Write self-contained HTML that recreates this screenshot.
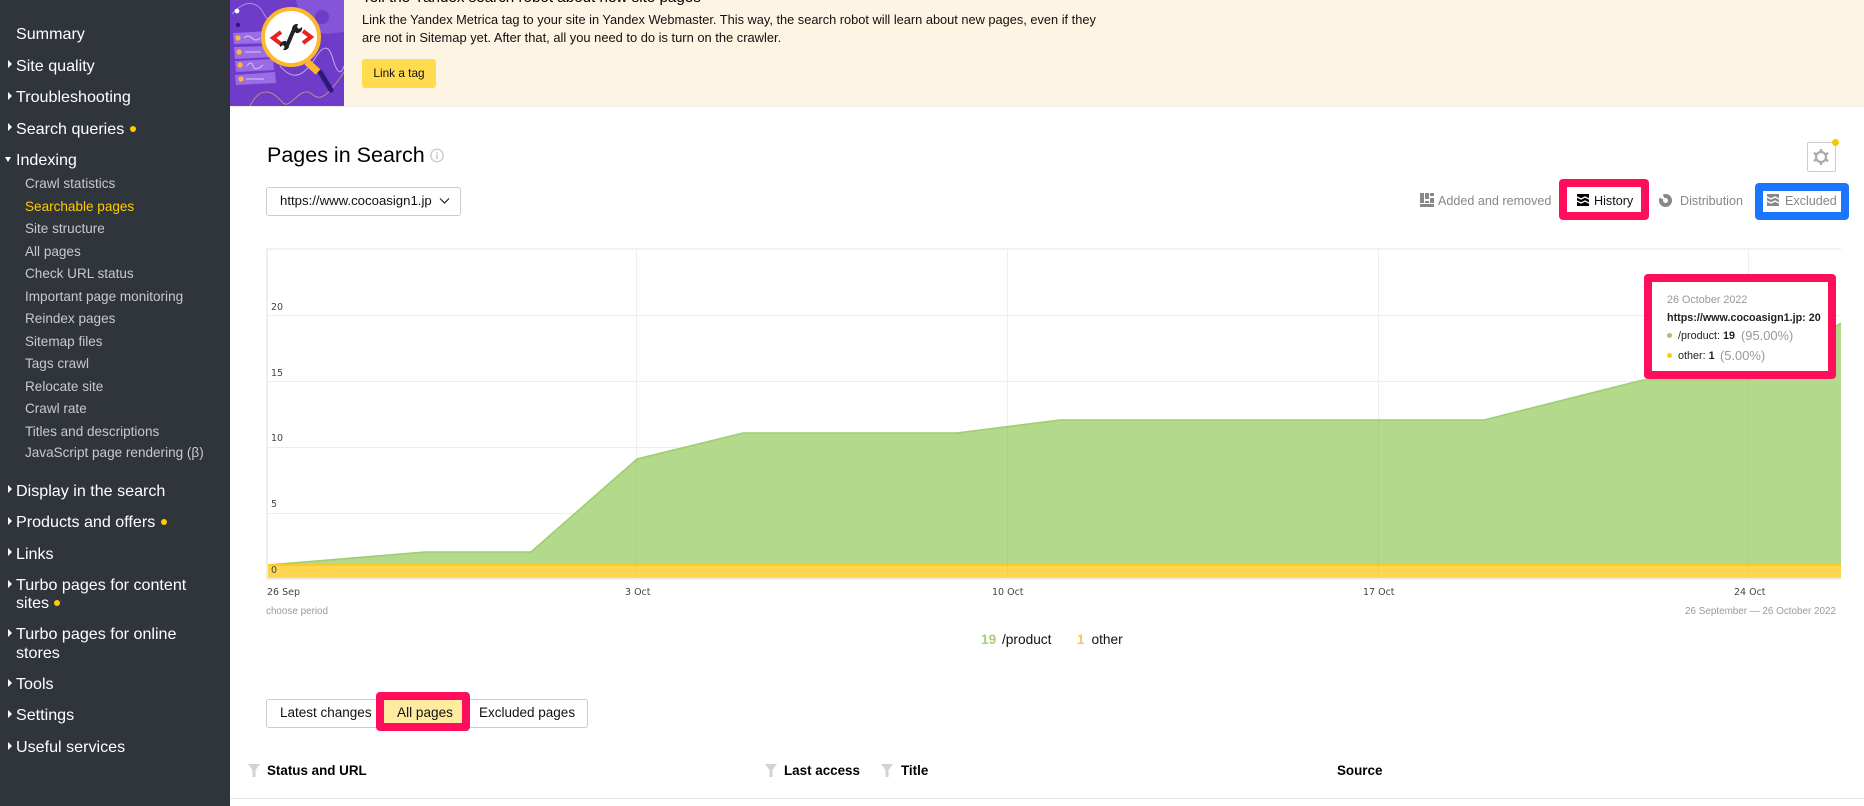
<!DOCTYPE html>
<html><head><meta charset="utf-8"><title>Pages in Search</title>
<style>
html,body{margin:0;padding:0;background:#fff;width:1864px;height:806px;overflow:hidden;font-family:"Liberation Sans",sans-serif;color:#000}
#r{position:relative;width:1864px;height:806px;overflow:hidden}
.a{position:absolute}
.t{position:absolute;white-space:nowrap;line-height:20px}
.m{font-size:16.1px;color:#fff;left:16px}
.s{font-size:13.55px;color:#c9c9c9;left:25px}
.tri{position:absolute;left:7.5px;width:0;height:0;border-left:4.5px solid #fff;border-top:4px solid transparent;border-bottom:4px solid transparent}
.dot{position:absolute;width:6px;height:6px;border-radius:50%;background:#fc0}
.ax{font-family:"DejaVu Sans",sans-serif;font-size:9.5px;color:#444}
.g{color:#888;font-size:12.6px}
.pk{position:absolute;box-sizing:border-box;border:8px solid #ff0f5b;border-radius:4px;background:#fff}
.th{font-size:13.4px;font-weight:bold}
</style></head><body><div id="r">

<div class="a" style="left:0;top:0;width:230px;height:806px;background:#30343b"></div>
<div class="t m" style="top:24px">Summary</div>
<div class="tri" style="top:60px"></div><div class="t m" style="top:56px">Site quality</div>
<div class="tri" style="top:92px"></div><div class="t m" style="top:87px">Troubleshooting</div>
<div class="tri" style="top:123px"></div><div class="t m" style="top:119px">Search queries</div><div class="dot" style="left:129.5px;top:125.5px"></div>
<div class="a" style="left:5px;top:157px;width:0;height:0;border-top:5px solid #fff;border-left:3.5px solid transparent;border-right:3.5px solid transparent"></div><div class="t m" style="top:150px">Indexing</div>
<div class="t s" style="top:174px">Crawl statistics</div>
<div class="t s" style="top:197px;color:#fc0">Searchable pages</div>
<div class="t s" style="top:219px">Site structure</div>
<div class="t s" style="top:242px">All pages</div>
<div class="t s" style="top:264px">Check URL status</div>
<div class="t s" style="top:287px">Important page monitoring</div>
<div class="t s" style="top:309px">Reindex pages</div>
<div class="t s" style="top:332px">Sitemap files</div>
<div class="t s" style="top:354px">Tags crawl</div>
<div class="t s" style="top:377px">Relocate site</div>
<div class="t s" style="top:399px">Crawl rate</div>
<div class="t s" style="top:422px">Titles and descriptions</div>
<div class="t s" style="top:443px">JavaScript page rendering (β)</div>
<div class="tri" style="top:485px"></div><div class="t m" style="top:481px">Display in the search</div>
<div class="tri" style="top:517px"></div><div class="t m" style="top:512px">Products and offers</div><div class="dot" style="left:160.5px;top:519px"></div>
<div class="tri" style="top:548px"></div><div class="t m" style="top:544px">Links</div>
<div class="tri" style="top:580px"></div><div class="t m" style="top:575px">Turbo pages for content</div>
<div class="t m" style="top:593px">sites</div><div class="dot" style="left:54px;top:600px"></div>
<div class="tri" style="top:629px"></div><div class="t m" style="top:624px">Turbo pages for online</div>
<div class="t m" style="top:643px">stores</div>
<div class="tri" style="top:679px"></div><div class="t m" style="top:674px">Tools</div>
<div class="tri" style="top:710px"></div><div class="t m" style="top:705px">Settings</div>
<div class="tri" style="top:742px"></div><div class="t m" style="top:737px">Useful services</div>

<div class="a" style="left:230px;top:0;width:1634px;height:106px;background:#fdf4e3;border-bottom:1.5px solid #ececec"></div>
<svg class="a" style="left:230px;top:0" width="114" height="106" viewBox="0 0 114 106">
<rect width="114" height="106" fill="#6f3bc9"/>
<path d="M66 0 L114 0 L114 32 L96 34 Q72 30 66 0Z" fill="#8455d8"/>
<circle cx="92" cy="17" r="7" fill="#6f3bc9"/>
<path d="M2 14 C16 -2 28 2 34 14 S56 32 64 20" fill="none" stroke="#a992de" stroke-width="1"/>
<circle cx="7" cy="11" r="2.4" fill="#fff"/><circle cx="8" cy="25" r="2.2" fill="#2d1a78"/>
<path d="M3 33 L41 31 L43 43 L4 44Z M4 47 L43 46 L44 57 L5 59Z M5 61 L43 59 L44 70 L6 72Z M5 75 L45 72 L46 83 L6 85Z" fill="#9a6de6"/>
<circle cx="8" cy="38" r="2.6" fill="#ffb92e"/><circle cx="9" cy="52" r="2.6" fill="#ffb92e"/><circle cx="10" cy="65" r="2.6" fill="#ffb92e"/><circle cx="11" cy="79" r="2.6" fill="#ffb92e"/>
<path d="M14 38 q4 -4 8 0 t8 0 M15 52 h16 M17 66 q4 -6 6 0 t10 -1 M16 79 h18" stroke="#d8c8f6" stroke-width="0.9" fill="none"/>
<path d="M50 66 C62 80 72 78 84 60 C92 46 98 44 102 56 C106 70 110 78 114 66" fill="none" stroke="#c9b3ef" stroke-width="0.9"/>
<path d="M20 106 C30 86 42 90 52 102 C60 112 70 84 82 94 C90 102 98 96 114 72" fill="none" stroke="#b98d90" stroke-width="1"/>
<line x1="90" y1="72" x2="101" y2="90" stroke="#2d1a78" stroke-width="5" stroke-linecap="round"/>
<line x1="77" y1="62" x2="88" y2="72" stroke="#fdb92e" stroke-width="7"/>
<circle cx="61" cy="37" r="28" fill="#fff" stroke="#fdb92e" stroke-width="4"/>
<path d="M51 32 L43 38 L51 44" fill="none" stroke="#e5231f" stroke-width="4"/>
<path d="M73 31 L81 37 L73 43" fill="none" stroke="#e5231f" stroke-width="4"/>
<path d="M65 27 L56 48" stroke="#222" stroke-width="4"/>
<path d="M62 28 a5 5 0 0 1 6 -4 l-1 3 2 2 3 -2 a5 5 0 0 1 -6 6Z M59 47 a5 5 0 0 1 -6 3 l2 -3 -2 -2 -3 2 a5 5 0 0 1 6 -6Z" fill="#222"/>
</svg>
<div class="t" style="left:362px;top:-12px;font-size:15.2px">Tell the Yandex search robot about new site pages</div>
<div class="t" style="left:362px;top:10px;font-size:12.8px;color:#111">Link the Yandex Metrica tag to your site in Yandex Webmaster. This way, the search robot will learn about new pages, even if they</div>
<div class="t" style="left:362px;top:28px;font-size:12.9px;color:#111">are not in Sitemap yet. After that, all you need to do is turn on the crawler.</div>
<div class="a" style="left:362px;top:59px;width:74px;height:29px;background:#ffdb4d;border-radius:3px"></div>
<div class="t" style="left:362px;width:74px;text-align:center;top:63px;font-size:11.8px;color:#111">Link a tag</div>

<div class="t" style="left:267px;top:144px;font-size:21.5px;line-height:22px">Pages in Search</div>
<svg class="a" style="left:430px;top:148px" width="15" height="15" viewBox="0 0 15 15"><circle cx="7" cy="7.5" r="6.2" fill="none" stroke="#ccc" stroke-width="1.5"/><rect x="6.2" y="6.5" width="1.6" height="4.5" fill="#ccc"/><rect x="6.2" y="4" width="1.6" height="1.6" fill="#ccc"/></svg>

<div class="a" style="left:266px;top:187px;width:193px;height:27px;border:1px solid #ccc;border-radius:3px"></div>
<div class="t" style="left:280px;top:191px;font-size:13.2px;color:#111">https://www.cocoasign1.jp</div>
<svg class="a" style="left:439px;top:195px" width="11" height="11" viewBox="0 0 11 11"><path d="M1 3.5 L5.5 8 L10 3.5" fill="none" stroke="#222" stroke-width="1.2"/></svg>

<div class="a" style="left:1807px;top:142px;width:27px;height:28px;border:1px solid #ccc;border-radius:2px"></div>
<svg class="a" style="left:1813px;top:149px" width="16" height="16" viewBox="0 0 16 16"><circle cx="8" cy="8" r="5" fill="none" stroke="#aaa" stroke-width="2.2"/><g stroke="#aaa" stroke-width="2.4"><line x1="8" y1="0" x2="8" y2="3"/><line x1="8" y1="13" x2="8" y2="16"/><line x1="0.8" y1="4" x2="3.4" y2="5.5"/><line x1="12.6" y1="10.5" x2="15.2" y2="12"/><line x1="0.8" y1="12" x2="3.4" y2="10.5"/><line x1="12.6" y1="5.5" x2="15.2" y2="4"/></g></svg>
<div class="a" style="left:1832px;top:139px;width:7px;height:7px;border-radius:50%;background:#f5c800"></div>

<svg class="a" style="left:1420px;top:193px" width="14" height="14" viewBox="0 0 14 14"><path d="M0 0H4V10H0Z M5 0H9V6H5Z M5 8H9V10H5Z M10 0H14V3H10Z M10 5H14V10H10Z M0 11H14V14H0Z" fill="#888"/></svg>
<div class="t g" style="left:1438px;top:191px">Added and removed</div>

<div class="pk" style="left:1559px;top:179px;width:90px;height:41px"></div>
<svg class="a" style="left:1577px;top:194px" width="12" height="12" viewBox="0 0 12 12"><rect width="12" height="12" fill="#000"/><path d="M0 3 L4 5 L8 3 L12 5 M0 7 L4 9 L8 7 L12 9" fill="none" stroke="#fff" stroke-width="1.3"/></svg>
<div class="t" style="left:1594px;top:191px;font-size:12.6px;color:#111">History</div>

<svg class="a" style="left:1659px;top:194px" width="13" height="13" viewBox="0 0 13 13"><circle cx="6.5" cy="6.5" r="4.5" fill="none" stroke="#888" stroke-width="4" stroke-dasharray="25 3.3" transform="rotate(-115 6.5 6.5)"/></svg>
<div class="t g" style="left:1680px;top:191px">Distribution</div>

<div class="pk" style="left:1755px;top:183px;width:94px;height:37px;border-color:#1a75ff"></div>
<svg class="a" style="left:1767px;top:194px" width="12" height="12" viewBox="0 0 12 12"><rect width="12" height="12" fill="#888"/><path d="M0 3 L4 5 L8 3 L12 5 M0 7 L4 9 L8 7 L12 9" fill="none" stroke="#fff" stroke-width="1.3"/></svg>
<div class="t g" style="left:1785px;top:191px">Excluded</div>

<svg class="a" style="left:0;top:0" width="1864" height="806" viewBox="0 0 1864 806">
<g stroke="#eeeeee" stroke-width="1" fill="none">
<line x1="266" y1="249" x2="1841" y2="249" stroke-width="1.5"/>
<line x1="266" y1="315.5" x2="1841" y2="315.5"/><line x1="266" y1="381.5" x2="1841" y2="381.5"/><line x1="266" y1="447.5" x2="1841" y2="447.5"/><line x1="266" y1="513.5" x2="1841" y2="513.5"/>
<line x1="636.5" y1="249" x2="636.5" y2="578"/><line x1="1007.5" y1="249" x2="1007.5" y2="578"/><line x1="1378.5" y1="249" x2="1378.5" y2="578"/><line x1="1748.5" y1="249" x2="1748.5" y2="578"/>
<line x1="267" y1="249" x2="267" y2="579" stroke-width="2"/>
<line x1="266" y1="579" x2="1841" y2="579" stroke-width="2"/>
</g>
<path d="M268 565 L425 552 L531 552 L637 459 L743 433 L957 433 L1060 420 L1484 420 L1643 380 L1748 380 L1841 323 L1841 565Z" fill="#b2d98c"/>
<path d="M268 565 L425 552 L531 552 L637 459 L743 433 L957 433 L1060 420 L1484 420 L1643 380 L1748 380 L1841 323" fill="none" stroke="#9fce6f" stroke-width="1.6"/>
<rect x="268" y="564" width="1573" height="14" fill="#ffd64f"/>
<rect x="268" y="564" width="1573" height="2" fill="#fcca25"/>
<g stroke="#000" stroke-opacity=".03"><line x1="636.5" y1="460" x2="636.5" y2="578"/><line x1="1007.5" y1="425" x2="1007.5" y2="578"/><line x1="1378.5" y1="420" x2="1378.5" y2="578"/><line x1="1748.5" y1="380" x2="1748.5" y2="578"/></g>
</svg>
<div class="t ax" style="left:271px;top:298px">20</div>
<div class="t ax" style="left:271px;top:364px">15</div>
<div class="t ax" style="left:271px;top:429px">10</div>
<div class="t ax" style="left:271px;top:495px">5</div>
<div class="t ax" style="left:271px;top:561px">0</div>
<div class="t ax" style="left:267px;top:583px">26 Sep</div>
<div class="t ax" style="left:625px;top:583px">3 Oct</div>
<div class="t ax" style="left:992px;top:583px">10 Oct</div>
<div class="t ax" style="left:1363px;top:583px">17 Oct</div>
<div class="t ax" style="left:1734px;top:583px">24 Oct</div>
<div class="t" style="left:266px;top:602px;font-size:9.9px;color:#999">choose period</div>
<div class="t" style="right:28px;top:602px;font-size:9.9px;color:#999">26 September — 26 October 2022</div>

<div class="pk" style="left:1644px;top:274px;width:192px;height:105px"></div>
<div class="t" style="left:1667px;top:289.5px;font-size:10.8px;color:#999">26 October 2022</div>
<div class="t" style="left:1667px;top:308px;font-size:10.75px;font-weight:bold;color:#222">https://www.cocoasign1.jp: 20</div>
<div class="a" style="left:1667px;top:333px;width:5px;height:5px;border-radius:50%;background:#99cc66"></div>
<div class="t" style="left:1678px;top:326px;font-size:10.8px;color:#222">/product: <b>19</b></div>
<div class="t" style="left:1741px;top:326px;font-size:12.9px;color:#999">(95.00%)</div>
<div class="a" style="left:1667px;top:353px;width:5px;height:5px;border-radius:50%;background:#fc0"></div>
<div class="t" style="left:1678px;top:346px;font-size:10.8px;color:#222">other: <b>1</b></div>
<div class="t" style="left:1720px;top:346px;font-size:12.9px;color:#999">(5.00%)</div>

<div class="t" style="left:981px;top:630px;font-size:13.7px;font-weight:bold;color:#a5d273">19</div>
<div class="t" style="left:1002px;top:630px;font-size:13.7px;color:#111">/product</div>
<div class="t" style="left:1077px;top:630px;font-size:13.7px;font-weight:bold;color:#fcc45a">1</div>
<div class="t" style="left:1091.5px;top:630px;font-size:13.7px;color:#111">other</div>

<div class="a" style="left:266px;top:699px;width:320px;height:27px;border:1px solid #ccc;border-radius:3px"></div>
<div class="t" style="left:280px;top:703px;font-size:13.5px;color:#111">Latest changes</div>
<div class="pk" style="left:376px;top:692px;width:94px;height:39px;background:#ffeba0"></div>
<div class="t" style="left:397px;top:703px;font-size:13.6px;color:#111">All pages</div>
<div class="t" style="left:479px;top:703px;font-size:13.5px;color:#111">Excluded pages</div>

<svg class="a" style="left:248px;top:763px" width="12" height="14" viewBox="0 0 12 14"><path d="M0 1H12L7.5 7V14H4.5V7Z" fill="#d2d2d2"/></svg>
<div class="t th" style="left:267px;top:761px">Status and URL</div>
<svg class="a" style="left:765px;top:763px" width="12" height="14" viewBox="0 0 12 14"><path d="M0 1H12L7.5 7V14H4.5V7Z" fill="#d2d2d2"/></svg>
<div class="t th" style="left:784px;top:761px">Last access</div>
<svg class="a" style="left:881px;top:763px" width="12" height="14" viewBox="0 0 12 14"><path d="M0 1H12L7.5 7V14H4.5V7Z" fill="#d2d2d2"/></svg>
<div class="t th" style="left:901px;top:761px">Title</div>
<div class="t th" style="left:1337px;top:761px">Source</div>
<div class="a" style="left:230px;top:798px;width:1634px;height:1px;background:#e5e5e5"></div>
</div></body></html>
